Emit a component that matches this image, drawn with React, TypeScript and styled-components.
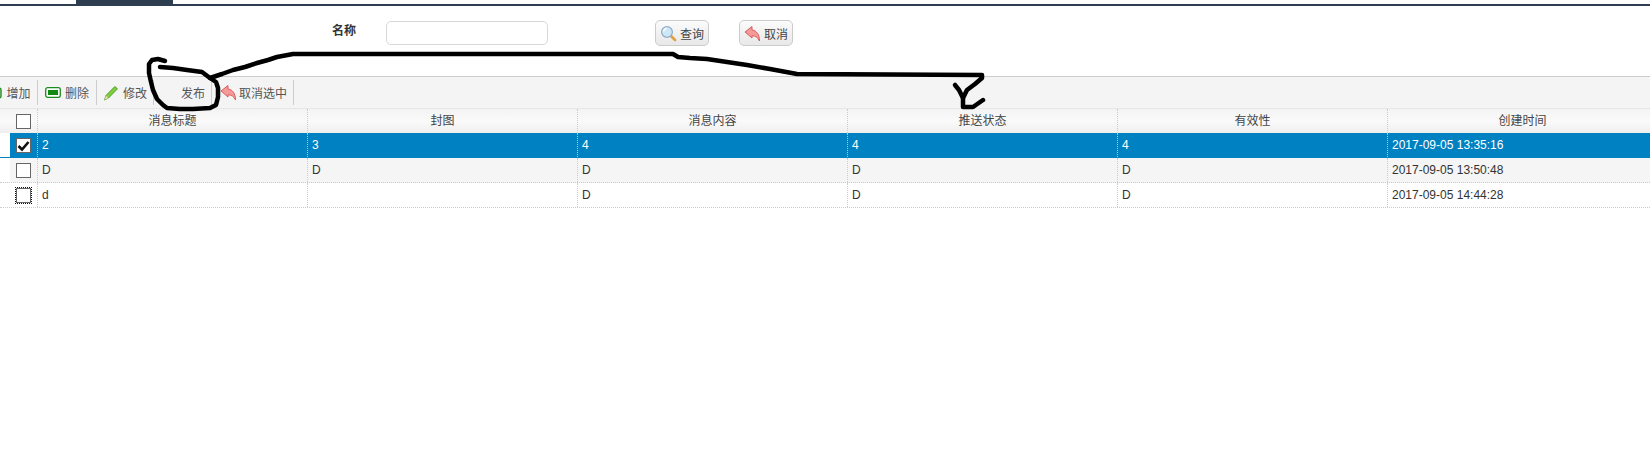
import React from "react";
import styled, { createGlobalStyle } from "styled-components";

const COLUMNS = ["消息标题", "封图", "消息内容", "推送状态", "有效性", "创建时间"];

const ROWS = [
  { cells: ["2", "3", "4", "4", "4", "2017-09-05 13:35:16"], selected: true },
  { cells: ["D", "D", "D", "D", "D", "2017-09-05 13:50:48"] },
  { cells: ["d", "", "D", "D", "D", "2017-09-05 14:44:28"], focused: true },
];

const SearchIcon = () => (
  <svg width="17" height="17" viewBox="0 0 17 17">
    <path d="M10.500 10.500l4.500 4.500" stroke="#e0a040" strokeWidth="2.800" strokeLinecap="round" />
    <circle cx="7" cy="7" r="5.400" fill="#cfe6f7" stroke="#8fb0cc" strokeWidth="1.300" />
    <path d="M3.600 6.500a3.500 3.500 0 0 1 3-3" fill="none" stroke="#fff" strokeWidth="1.300" />
  </svg>
);

const UndoIcon = () => (
  <svg width="17" height="17" viewBox="0 0 17 17">
    <path
      d="M1 7L8 1.500V5C12.500 5.500 15.500 9.500 15.500 16C14 12.500 11.500 10.800 8 10.800V13z"
      fill="#f59a9a"
      stroke="#d8504e"
      strokeWidth="0.900"
      strokeLinejoin="round"
    />
  </svg>
);

const AddIcon = () => (
  <svg width="16" height="16" viewBox="0 0 16 16">
    <rect x="1" y="3" width="14" height="10" rx="2" fill="#e8f5e4" stroke="#1c8a1c" strokeWidth="1.400" />
    <path d="M8 5.500v5M5.500 8h5" stroke="#1c8a1c" strokeWidth="1.400" />
  </svg>
);

const RemoveIcon = () => (
  <svg width="16" height="11" viewBox="0 0 16 11">
    <rect x="0.700" y="0.700" width="14.600" height="9.600" rx="2" fill="#fff" stroke="#1c8a1c" strokeWidth="1.300" />
    <rect x="3" y="3" width="10" height="5" fill="#128a12" />
  </svg>
);

const PencilIcon = () => (
  <svg width="16" height="16" viewBox="0 0 16 16">
    <path d="M1.500 15L3 10.500L11.800 1.500L14.500 3.800L5.500 13z" fill="#7ccf3a" stroke="#3c8a1c" strokeWidth="0.800" strokeLinejoin="round" />
    <path d="M1.500 15L3 10.500L5.500 13z" fill="#e9d9a8" />
  </svg>
);

const App = () => {
  return (
    <Page>
      <GlobalStyle />
      <TopBar>
        <ActiveTab />
      </TopBar>
      <SearchForm>
        <FieldLabel>名称</FieldLabel>
        <TextInput />
        <SearchButton $left={107}>
          <SearchIcon />
          查询
        </SearchButton>
        <SearchButton $left={30}>
          <UndoIcon />
          取消
        </SearchButton>
      </SearchForm>
      <Toolbar>
        <ToolButton $width={52} $inset={-14} $paddingRight={6}>
          <AddIcon />
          增加
        </ToolButton>
        <ToolButton $width={59}>
          <RemoveIcon />
          删除
        </ToolButton>
        <ToolButton $width={57}>
          <PencilIcon />
          修改
        </ToolButton>
        <ToolButton $width={58} $end $paddingRight={6}>
          发布
        </ToolButton>
        <ToolButton $width={82} $paddingLeft={2} $gap={2}>
          <UndoIcon />
          取消选中
        </ToolButton>
      </Toolbar>
      <HeaderRow>
        <RowNumber />
        <CheckCell>
          <CheckBox />
        </CheckCell>
        {COLUMNS.map((title) => (
          <HeaderCell key={title}>{title}</HeaderCell>
        ))}
      </HeaderRow>
      {ROWS.map((row, index) => (
        <Row key={index} $selected={row.selected} $odd={index % 2 === 1}>
          <RowNumber />
          <CheckCell $selected={row.selected}>
            <CheckBox $focused={row.focused}>
              {row.selected && (
                <svg width="13" height="13" viewBox="0 0 13 13">
                  <path d="M1.500 7l3.500 3.500L11.500 3" fill="none" stroke="#111" strokeWidth="2.600" />
                </svg>
              )}
            </CheckBox>
          </CheckCell>
          {row.cells.map((cell, cellIndex) => (
            <Cell key={cellIndex} $selected={row.selected}>
              {cell}
            </Cell>
          ))}
        </Row>
      ))}
      <Scribble width="1650" height="457" viewBox="0 0 1650 457">
        <path d="M165 61L158 59L152 60L149 64L149 73L151 82L153 90L157 99L163 105L167 108L180 109L193 109L210 108L216 105L218 97L218 88L216 82L210 78L202 72L187 70L173 68L160 67" />
        <path d="M210 78L222 74L233 70L245 67L257 63L268 60L277 57L293 54L400 54L673 54L678 57L690 58L707 59L727 62L747 65L770 69L797 74L982 75L982 78L975 84L967 90L963 98L963 107L973 107L983 100" />
        <path d="M955 85L959 90L963 98" />
      </Scribble>
    </Page>
  );
};

export default App;

const GlobalStyle = createGlobalStyle`
  html, body {
    margin: 0;
    padding: 0;
    background: #fff;
  }
  body {
    font-family: "Liberation Sans", "Noto Sans CJK SC", sans-serif;
    font-size: 12px;
    color: #444;
  }
`;

const Page = styled.div`
  position: relative;
  width: 1650px;
  height: 457px;
  overflow: hidden;
  background: #fff;
`;

const TopBar = styled.div`
  height: 4px;
  border-bottom: 2px solid #2c3e50;
`;

const ActiveTab = styled.div`
  width: 97px;
  height: 4px;
  margin-left: 76px;
  background: #2c3e50;
`;

const SearchForm = styled.div`
  display: flex;
  align-items: center;
  height: 70px;
  padding: 0 0 16px 332px;
  box-sizing: border-box;
`;

const FieldLabel = styled.label`
  width: 54px;
  margin-top: -7px;
  font-weight: bold;
  color: #333;
`;

const TextInput = styled.input`
  width: 162px;
  height: 24px;
  padding: 0;
  box-sizing: border-box;
  border: 1px solid #d8d8d8;
  border-radius: 5px;
  background: #fff;
`;

const SearchButton = styled.button<{ $left: number }>`
  display: flex;
  align-items: center;
  justify-content: center;
  gap: 3px;
  width: 54px;
  height: 26px;
  margin-left: ${(p) => p.$left}px;
  padding: 0;
  border: 1px solid #ccc;
  border-radius: 5px;
  background: linear-gradient(#fbfbfb, #e8e8e8);
  font: inherit;
  color: #444;
`;

const Toolbar = styled.div`
  display: flex;
  align-items: center;
  height: 32px;
  box-sizing: border-box;
  border-top: 1px solid #ccc;
  background: #f4f4f4;
`;

const ToolButton = styled.div<{
  $width: number;
  $inset?: number;
  $end?: boolean;
  $gap?: number;
  $paddingLeft?: number;
  $paddingRight?: number;
}>`
  display: flex;
  flex: none;
  align-items: center;
  justify-content: ${(p) => (p.$end ? "flex-end" : "center")};
  gap: ${(p) => p.$gap ?? 4}px;
  width: ${(p) => p.$width}px;
  height: 25px;
  padding: 0 ${(p) => p.$paddingRight ?? 0}px 0 ${(p) => p.$paddingLeft ?? 0}px;
  margin-left: ${(p) => p.$inset ?? 0}px;
  box-sizing: border-box;
  border-right: 1px solid #ccc;
  color: #555;
  white-space: nowrap;
`;

const HeaderRow = styled.div`
  display: grid;
  grid-template-columns: 10px 28px repeat(6, 270px);
  height: 25px;
  box-sizing: border-box;
  border-top: 1px solid #e6e6e6;
  background: linear-gradient(#f3f3f3, #fafafa 50%, #efefef);
`;

const RowNumber = styled.div`
  border-right: 0;
`;

const CheckCell = styled.div<{ $selected?: boolean }>`
  display: flex;
  align-items: center;
  justify-content: center;
  border-right: 1px dotted ${(p) => (p.$selected ? "#9fd0ea" : "#ccc")};
  box-sizing: border-box;
`;

const CheckBox = styled.div<{ $focused?: boolean }>`
  display: flex;
  align-items: center;
  justify-content: center;
  width: 15px;
  height: 15px;
  box-sizing: border-box;
  border: 1px solid #666;
  outline: ${(p) => (p.$focused ? "1px dotted #111" : "none")};
  background: #fff;
`;

const HeaderCell = styled.div`
  display: flex;
  align-items: center;
  justify-content: center;
  padding-bottom: 3px;
  box-sizing: border-box;
  border-right: 1px dotted #ccc;
  color: #444;
`;

const Row = styled.div<{ $selected?: boolean; $odd?: boolean }>`
  display: grid;
  grid-template-columns: 10px 28px repeat(6, 270px);
  height: 25px;
  box-sizing: border-box;
  border-bottom: 1px dotted ${(p) => (p.$selected ? "#0081c2" : "#ccc")};
  background: ${(p) => (p.$selected ? "#0081c2" : p.$odd ? "#f5f5f5" : "#fff")};
  color: ${(p) => (p.$selected ? "#fff" : "#333")};
  & > ${RowNumber} {
    background: #fff;
  }
`;

const Cell = styled.div<{ $selected?: boolean }>`
  display: flex;
  align-items: center;
  padding-left: 4px;
  box-sizing: border-box;
  border-right: 1px dotted ${(p) => (p.$selected ? "#9fd0ea" : "#ccc")};
`;

const Scribble = styled.svg`
  position: absolute;
  top: 0;
  left: 0;
  pointer-events: none;
  fill: none;
  stroke: #000;
  stroke-width: 4.5;
  stroke-linecap: round;
  stroke-linejoin: round;
`;
